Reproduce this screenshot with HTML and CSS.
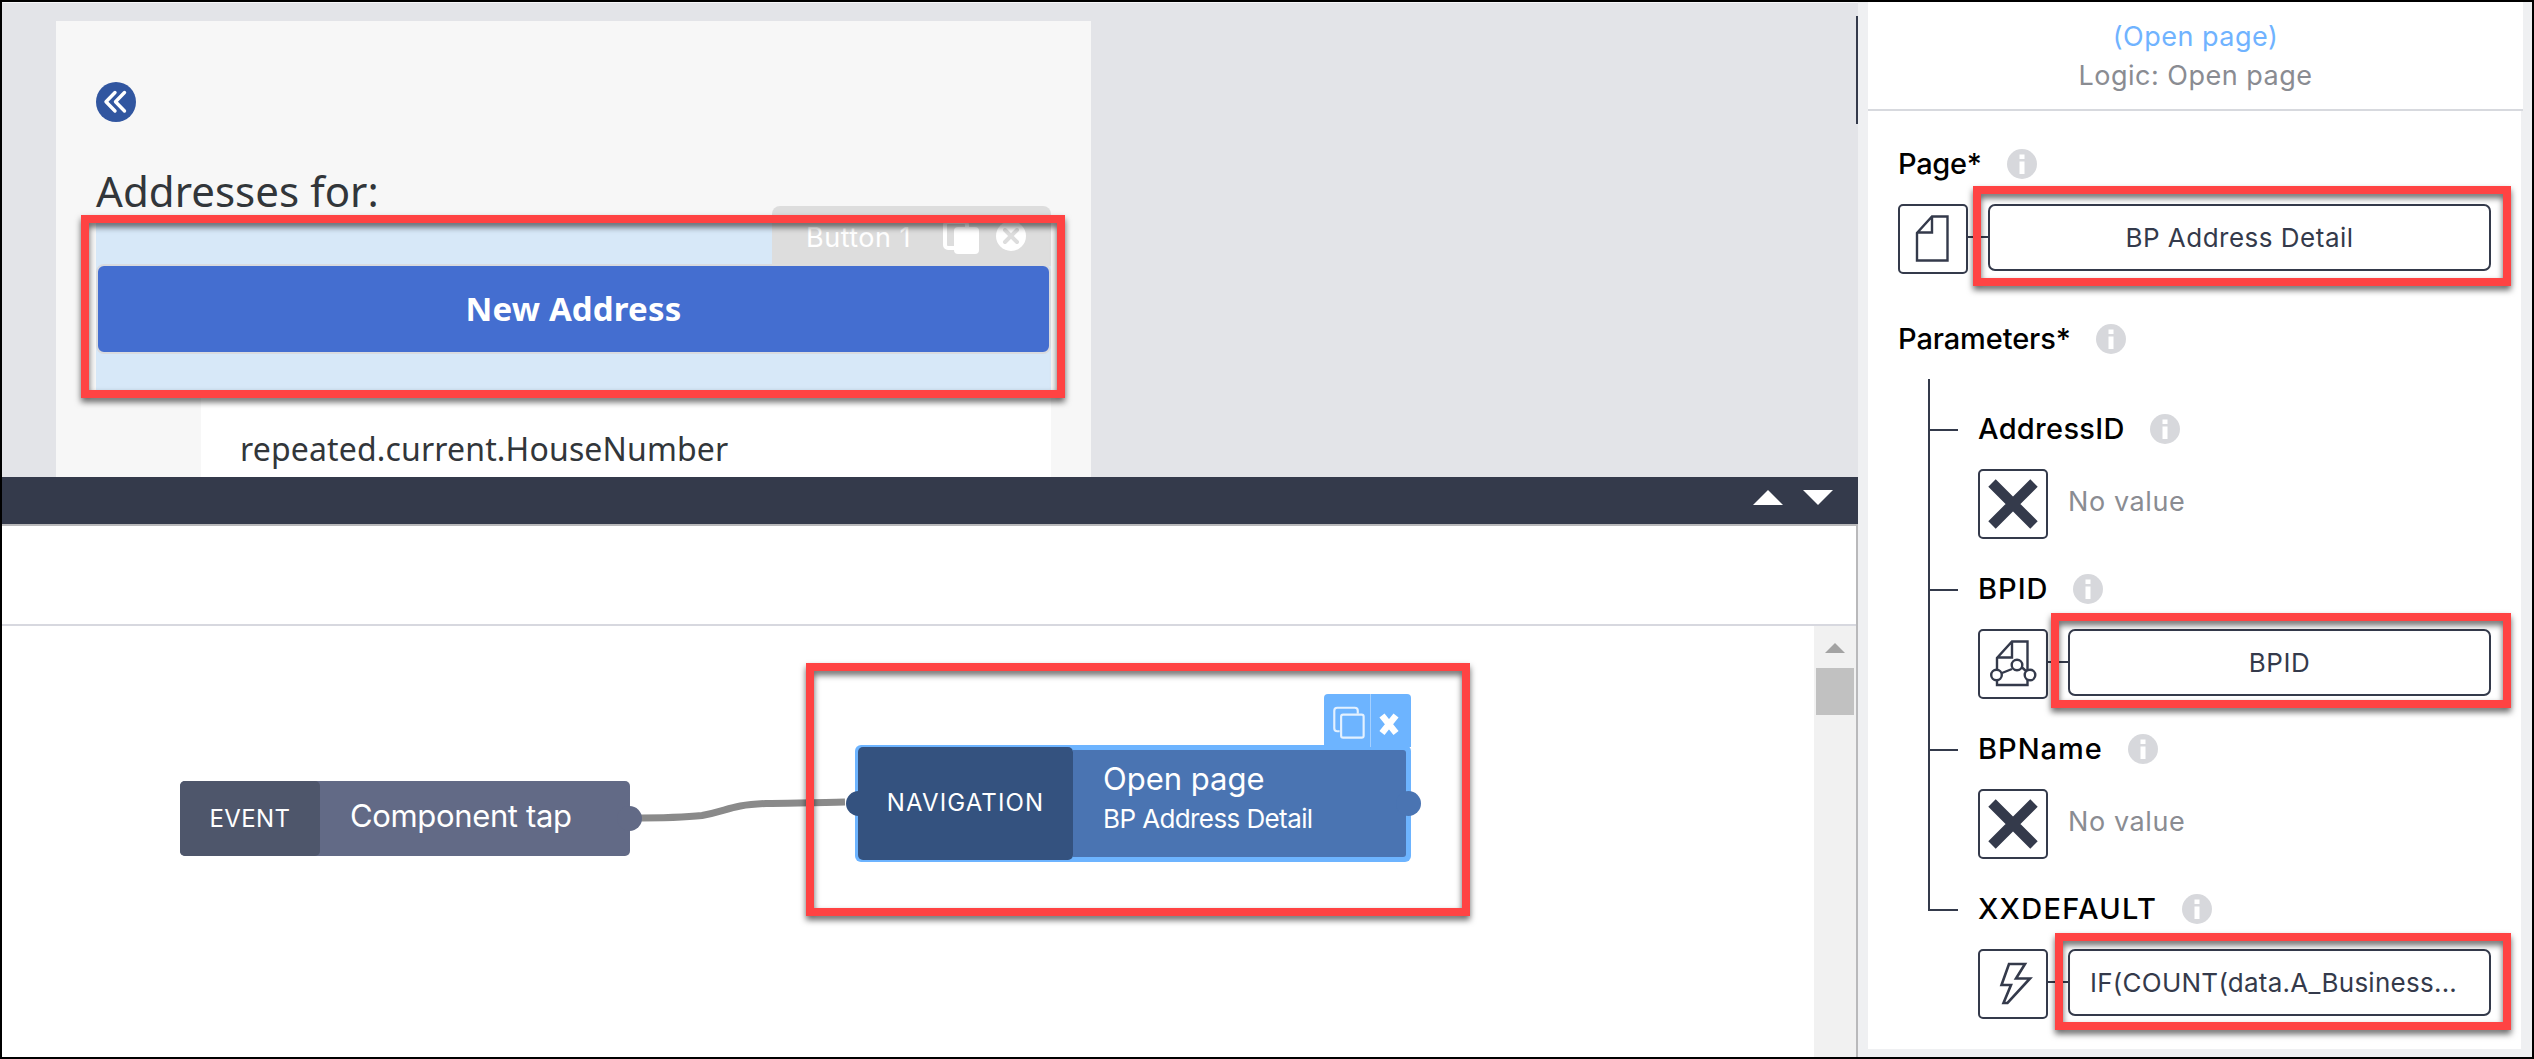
FILE: index.html
```html
<!DOCTYPE html>
<html lang="en">
<head>
<meta charset="utf-8">
<title>Logic editor</title>
<link rel="stylesheet" href="styles.css">
</head>
<body>
<div class="screen">
  <main class="main">
    <section class="canvas">
      <div class="phone">
        <svg class="back" viewBox="0 0 40 40"><circle cx="20" cy="20" r="20" fill="#3156a0"/><path d="M19 10.5 L10 19.7 L19 29 M28.5 10.5 L19.5 19.7 L28.5 29" fill="none" stroke="#fff" stroke-width="3.4" stroke-linecap="round" stroke-linejoin="round"/></svg>
        <h1 class="heading">Addresses for:</h1>
        <div class="button-zone">
          <div class="tag">
            <span class="tag-name">Button 1</span>
            <svg class="tag-copy" viewBox="0 0 36 32"><path d="M24 5V3a3 3 0 0 0-3-3H5a3 3 0 0 0-3 3v20a3 3 0 0 0 3 3h6" fill="none" stroke="#fff" stroke-width="4"/><rect x="11" y="5" width="25" height="27" rx="4" fill="#fff"/></svg>
            <svg class="tag-close" viewBox="0 0 30 30"><circle cx="15" cy="15" r="15" fill="#fff"/><path d="M9 9l12 12M21 9L9 21" stroke="#ddd" stroke-width="4" stroke-linecap="round"/></svg>
          </div>
          <div class="new-address">New Address</div>
        </div>
        <div class="card">repeated.current.HouseNumber</div>
      </div>
      <div class="edge-handle"></div>
    </section>
    <div class="divider-bar">
      <svg viewBox="0 0 30 15"><path d="M15 0L30 15H0z" fill="#fff"/></svg>
      <svg viewBox="0 0 30 15"><path d="M0 0H30L15 15z" fill="#fff"/></svg>
    </div>
    <section class="logic">
      <div class="logic-toolbar"></div>
      <div class="logic-body">
        <div class="board">
          <svg class="wire" viewBox="0 0 230 40"><path d="M0 24 C30 24 50 24 72 21.500 C98 17 100 11 136 9.500 C156 8.800 186 9 215 8" fill="none" stroke="#8a8a8a" stroke-width="7"/></svg>
          <div class="node node-event">
            <span class="port port-out"></span>
            <div class="node-kind">EVENT</div>
            <div class="node-text"><span class="node-title tap">Component tap</span></div>
          </div>
          <div class="node node-nav">
            <span class="port port-in"></span>
            <span class="port port-out"></span>
            <div class="node-actions">
              <svg class="act-copy" viewBox="0 0 47 53"><path d="M16 37.500h-2.500a3 3 0 0 1-3-3v-18a3 3 0 0 1 3-3h18a3 3 0 0 1 3 3v3" fill="none" stroke="#e4f1ff" stroke-width="2.200"/><rect x="17.500" y="20.500" width="23" height="23.500" rx="2" fill="none" stroke="#e4f1ff" stroke-width="2.200"/></svg>
              <svg class="act-close" viewBox="0 0 40 53"><path d="M11 24L21 36.500M21 24L11 36.500" stroke="#fff" stroke-width="6.500" stroke-linecap="square" transform="translate(2)"/></svg>
            </div>
            <div class="node-kind">NAVIGATION</div>
            <div class="node-text"><span class="node-title">Open page</span><span class="node-sub">BP Address Detail</span></div>
          </div>
        </div>
        <div class="scrollbar">
          <svg viewBox="0 0 20 10"><path d="M10 0L20 10H0z" fill="#a3a3a3"/></svg>
          <div class="thumb"></div>
        </div>
      </div>
    </section>
  </main>
  <aside class="side">
    <div class="panel">
      <header class="panel-head">
        <div class="panel-name">(Open page)</div>
        <div class="panel-type">Logic: Open page</div>
      </header>
      <div class="props">
        <div class="prop">
          <div class="label"><span class="tight">Page*</span><svg class="info" viewBox="0 0 30 30"><circle cx="15" cy="15" r="15" fill="#d7d8dc"/><path d="M12.500 5.500h5v4.500h-5zM12.500 12.500h5v12.500h-5z" fill="#fff"/></svg></div>
          <div class="field">
            <div class="kind"><svg viewBox="0 0 66 66"><path d="M32 10.500H47.500V54.500H17V27zM32 10.500V26.500H17" fill="none" stroke="#343a4b" stroke-width="2.400"/></svg></div>
            <div class="link"></div>
            <div class="value">BP Address Detail</div>
          </div>
        </div>
        <div class="label"><span class="params">Parameters*</span><svg class="info" viewBox="0 0 30 30"><circle cx="15" cy="15" r="15" fill="#d7d8dc"/><path d="M12.500 5.500h5v4.500h-5zM12.500 12.500h5v12.500h-5z" fill="#fff"/></svg></div>
        <div class="tree">
          <div class="param">
            <div class="label"><span class="mid">AddressID</span><svg class="info" viewBox="0 0 30 30"><circle cx="15" cy="15" r="15" fill="#d7d8dc"/><path d="M12.500 5.500h5v4.500h-5zM12.500 12.500h5v12.500h-5z" fill="#fff"/></svg></div>
            <div class="field">
              <div class="kind"><svg viewBox="0 0 66 66"><path d="M12 12L54 54M54 12L12 54" stroke="#343a4b" stroke-width="10.500"/></svg></div>
              <div class="empty">No value</div>
            </div>
          </div>
          <div class="param">
            <div class="label"><span class="wide">BPID</span><svg class="info" viewBox="0 0 30 30"><circle cx="15" cy="15" r="15" fill="#d7d8dc"/><path d="M12.500 5.500h5v4.500h-5zM12.500 12.500h5v12.500h-5z" fill="#fff"/></svg></div>
            <div class="field">
              <div class="kind"><svg viewBox="0 0 66 66"><g fill="none" stroke="#343a4b" stroke-width="2.400"><path d="M17 39V27L32 10.500H47.500V40M17 49V54H47.500V49M32 10.500V26.500H17M22 42L32 38M41.500 36L46 40"/><circle cx="16.500" cy="44" r="5.300"/><circle cx="37" cy="34" r="5.300"/><circle cx="50" cy="44" r="5.300"/></g></svg></div>
              <div class="link"></div>
              <div class="value">BPID</div>
            </div>
          </div>
          <div class="param">
            <div class="label"><span class="wide">BPName</span><svg class="info" viewBox="0 0 30 30"><circle cx="15" cy="15" r="15" fill="#d7d8dc"/><path d="M12.500 5.500h5v4.500h-5zM12.500 12.500h5v12.500h-5z" fill="#fff"/></svg></div>
            <div class="field">
              <div class="kind"><svg viewBox="0 0 66 66"><path d="M12 12L54 54M54 12L12 54" stroke="#343a4b" stroke-width="10.500"/></svg></div>
              <div class="empty">No value</div>
            </div>
          </div>
          <div class="param">
            <div class="label"><span class="widest">XXDEFAULT</span><svg class="info" viewBox="0 0 30 30"><circle cx="15" cy="15" r="15" fill="#d7d8dc"/><path d="M12.500 5.500h5v4.500h-5zM12.500 12.500h5v12.500h-5z" fill="#fff"/></svg></div>
            <div class="field">
              <div class="kind"><svg viewBox="0 0 66 66"><path d="M29 13H45L36 27.500H50L27.500 52H23.500L31 34H21.500z" fill="none" stroke="#343a4b" stroke-width="2.600"/></svg></div>
              <div class="link"></div>
              <div class="value formula">IF(COUNT(data.A_Business...</div>
            </div>
          </div>
        </div>
      </div>
    </div>
  </aside>
  <div class="mark mark-button"></div>
  <div class="mark mark-node"></div>
  <div class="mark mark-page"></div>
  <div class="mark mark-bpid"></div>
  <div class="mark mark-default"></div>
</div>
</body>
</html>
```
FILE: styles.css
```css
* { box-sizing: border-box; }
body { margin: 0; font-family: Inter, sans-serif; color: #343a4b; }
svg { display: block; }
.screen { position: relative; display: flex; width: 2534px; height: 1059px; border: 2px solid #000; overflow: hidden; background: #fff; }

.main { display: flex; flex-direction: column; width: 1856px; }
.canvas { display: flex; justify-content: space-between; height: 475px; padding: 18px 0 0 54px; background: #e3e4e8; border-top: 1px solid #f6f6f8; overflow: hidden; }
.phone { width: 1035px; height: 520px; padding: 61px 40px 0; background: #f7f7f7; font-family: "Noto Sans", sans-serif; color: #32363a; }
.back { width: 40px; height: 40px; }
.heading { margin: 44px 0 0; font-size: 42px; line-height: 50px; font-weight: 400; letter-spacing: .05px; white-space: nowrap; }
.button-zone { position: relative; margin-top: 2px; padding: 46px 0 40px; background: #d7e8f8; }
.new-address { height: 90px; border: 2px solid #d9dbdf; border-radius: 8px; background: #446ed0; color: #fff; font-size: 33px; font-weight: 700; letter-spacing: .15px; line-height: 86px; text-align: center; }
.tag { position: absolute; right: 0; top: -12px; display: flex; width: 279px; height: 60px; padding: 0 25px 0 34px; align-items: center; border-radius: 8px 8px 0 0; background: #ddd; color: #fff; font-family: Inter, sans-serif; }
.tag-name { flex: 1; font-size: 27px; letter-spacing: .5px; padding-top: 2px; }
.tag-copy { width: 36px; height: 32px; margin: 4px 17px 0 0; }
.tag-close { width: 30px; height: 30px; }
.card { height: 120px; margin-left: 105px; padding: 33px 0 0 39px; background: #fff; font-size: 32px; line-height: 44px; letter-spacing: .15px; }
.edge-handle { width: 2px; height: 108px; margin-top: -5px; background: #343a4b; }

.divider-bar { display: flex; justify-content: flex-end; gap: 20px; height: 47px; padding: 13px 25px 0 0; background: #343a4b; }
.divider-bar svg { width: 30px; height: 15px; }
.logic { flex: 1; display: flex; flex-direction: column; border-top: 2px solid #b9b9bb; border-right: 2px solid #b9b9bb; background: #fff; }
.logic-toolbar { height: 100px; border-bottom: 2px solid #d7d8df; }
.logic-body { flex: 1; display: flex; }
.board { position: relative; flex: 1; }
.scrollbar { width: 42px; background: #f1f1f1; padding: 17px 2px 0; }
.scrollbar svg { width: 20px; height: 10px; margin: 0 auto 15px 9px; }
.thumb { height: 47px; background: #c1c1c1; }

.wire { position: absolute; left: 628px; top: 168px; width: 230px; height: 40px; }
.node { position: absolute; display: flex; color: #fff; border-radius: 5px; }
.node-kind { position: relative; display: flex; align-items: center; justify-content: center; border-radius: 5px; font-size: 24px; font-weight: 400; }
.node-text { position: relative; display: flex; flex-direction: column; flex: 1; padding-left: 30px; white-space: nowrap; }
.node-title { font-size: 31px; line-height: 38px; }
.tap { letter-spacing: -.35px; }
.node-sub { font-size: 26px; line-height: 38px; letter-spacing: -.6px; }
.port { position: absolute; width: 25px; height: 25px; border-radius: 50%; }
.node-event { left: 178px; top: 155px; width: 450px; height: 75px; background: #626a86; }
.node-event .node-kind { width: 140px; background: #4e566b; letter-spacing: .4px; padding-bottom: 1px; }
.node-event .node-text { justify-content: center; padding-bottom: 5px; }
.node-event .port { right: -12px; top: 25px; background: #626a86; }
.node-nav { left: 853px; top: 119px; width: 556px; height: 117px; padding: 2px 5px 2px 3px; border-radius: 6px; background: #6db4ff; }
.node-nav .node-kind { width: 215px; background: #34527f; letter-spacing: 1.1px; padding-bottom: 2px; }
.node-nav .node-text { margin: 3px 0; padding-top: 10px; background: #4a74b2; gap: 2px; border-radius: 0 3px 3px 0; }
.node-nav .port-in { left: -9px; top: 46px; background: #34527f; }
.node-nav .port-out { right: -10px; top: 46px; background: #4a74b2; z-index: 1; }
.node-actions { position: absolute; right: 0; top: -51px; display: flex; border-radius: 4px 4px 0 0; background: #6db4ff; }
.act-copy { width: 47px; height: 53px; border-right: 1px solid #a5d0ff; }
.act-close { width: 40px; height: 53px; }

.side { width: 674px; padding: 0 11px 8px 10px; background: #eff0f2; }
.panel { height: 100%; background: #fff; }
.panel-head { height: 109px; margin-right: -2px; padding-top: 15px; border-bottom: 2px solid #d7d9de; background: #fff; font-size: 27px; line-height: 39px; letter-spacing: .5px; text-align: center; }
.panel-name { color: #70b3ff; }
.panel-type { color: #8a8c92; }
.props { padding: 38px 30px 0; }
.prop { margin-bottom: 50px; }
.label { display: flex; gap: 25px; height: 30px; color: #000; font-size: 29px; font-weight: 500; line-height: 30px; white-space: nowrap; }
.info { width: 30px; height: 30px; }
.tight { letter-spacing: -.3px; }
.params { letter-spacing: -.1px; }
.mid { letter-spacing: .3px; }
.wide { letter-spacing: 1px; }
.widest { letter-spacing: 1.3px; }
.field { display: flex; height: 70px; margin-top: 25px; }
.kind { width: 70px; height: 70px; border: 2px solid #343a4b; border-radius: 5px; }
.link { width: 20px; height: 2px; margin-top: 32px; background: #343a4b; }
.value { flex: 1; display: flex; align-items: center; justify-content: center; height: 67px; border: 2px solid #343a4b; border-radius: 7px; font-size: 26px; letter-spacing: .5px; white-space: nowrap; }
.formula { justify-content: flex-start; padding-left: 20px; letter-spacing: .25px; }
.empty { align-self: center; padding: 0 0 5px 20px; color: #8a8c92; font-size: 27px; letter-spacing: .6px; }
.tree { position: relative; display: flex; flex-direction: column; gap: 35px; margin-top: 25px; padding: 35px 0 0 80px; }
.tree::before { content: ""; position: absolute; left: 30px; top: 0; width: 2px; height: 532px; background: #343a4b; }
.param .label { position: relative; }
.param .label::before { content: ""; position: absolute; left: -50px; top: 15px; width: 30px; height: 2px; background: #343a4b; }

.mark { position: absolute; z-index: 5; border: 8px solid #ff4343; filter: drop-shadow(0 4px 3px rgba(0, 0, 0, .6)); }
.mark-button { left: 79px; top: 213px; width: 984px; height: 183px; }
.mark-node { left: 804px; top: 661px; width: 664px; height: 253px; }
.mark-page { left: 1971px; top: 184px; width: 538px; height: 100px; }
.mark-bpid { left: 2049px; top: 611px; width: 460px; height: 95px; }
.mark-default { left: 2053px; top: 931px; width: 456px; height: 97px; }
```
